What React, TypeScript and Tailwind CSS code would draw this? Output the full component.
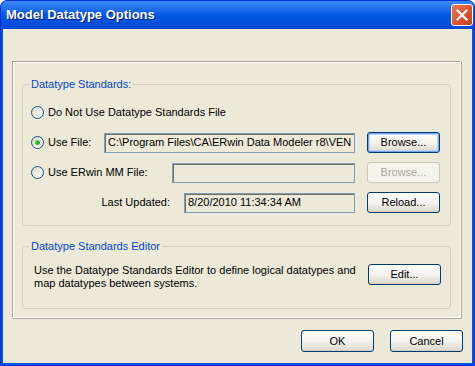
import React from 'react';

const font = { fontFamily: '"Liberation Sans", Arial, sans-serif' };

const Radio: React.FC<{ checked?: boolean }> = ({ checked }) => (
  <span className="relative inline-block w-[13px] h-[13px] rounded-full border border-[#1c5180] bg-gradient-to-br from-[#dcd9cb] to-white shrink-0">
    {checked && (
      <span className="absolute left-[3px] top-[3px] w-[5px] h-[5px] rounded-full bg-gradient-to-br from-[#55d551] to-[#18961a]" />
    )}
  </span>
);

const Button: React.FC<{ label: string; focused?: boolean; disabled?: boolean; className?: string }> = ({
  label,
  focused,
  disabled,
  className = '',
}) => {
  if (disabled) {
    return (
      <div
        className={`flex items-center justify-center w-[73px] h-[21px] rounded-[3px] border border-[#c9c7ba] bg-[#f5f4ea] text-[#aca899] text-[11px] ${className}`}
      >
        {label}
      </div>
    );
  }
  return (
    <div
      className={`flex items-center justify-center w-[73px] h-[21px] rounded-[3px] border border-[#003c74] bg-gradient-to-b from-white via-[#f4f3ee] to-[#dcd8ca] text-black text-[11px] ${
        focused ? 'shadow-[inset_0_0_0_1px_#7ba2e7,inset_0_0_0_2px_#bcd4f6]' : 'shadow-[inset_0_-1px_0_#d6d0c5]'
      } ${className}`}
    >
      {label}
    </div>
  );
};

const Field: React.FC<{ value?: string; className?: string }> = ({ value = '', className = '' }) => (
  <div
    className={`h-[20px] border border-[#7f9db9] bg-[#ece9d8] shadow-[inset_1px_1px_0_#716f64] flex items-center px-[3px] text-[11px] text-black whitespace-nowrap overflow-hidden ${className}`}
  >
    {value}
  </div>
);

export default function App() {
  return (
    <div
      className="w-[475px] h-[366px] flex flex-col bg-[#0055e5] rounded-t-[7px] overflow-hidden border border-[#0831d9]"
      style={font}
    >
      {/* title bar */}
      <div className="h-[28px] shrink-0 flex items-center justify-between pl-[5px] pr-[1px] bg-gradient-to-b from-[#3d8bf5] via-[#0058e6] to-[#0049d4]">
        <span className="text-white font-bold text-[13px] [text-shadow:1px_1px_0_#0a1e7a]">Model Datatype Options</span>
        <div className="w-[22px] h-[22px] rounded-[3px] border border-white bg-gradient-to-br from-[#e77c5e] via-[#e0532f] to-[#c8401d] flex items-center justify-center">
          <svg width="12" height="12" viewBox="0 0 12 12">
            <path d="M1.5 1.5 L10.5 10.5 M10.5 1.5 L1.5 10.5" stroke="white" strokeWidth="2.2" strokeLinecap="square" />
          </svg>
        </div>
      </div>

      {/* body */}
      <div className="flex-1 mx-[2px] mb-[2px] bg-[#ece9d8] flex flex-col">
        <div className="ml-[9px] mt-[32px] w-[449px] h-[257px] border border-t-[#aca899] border-l-[#aca899] border-r-white border-b-white shadow-[1px_1px_0_#aca899,inset_1px_1px_0_white] px-[9px] pt-[16px]">
          <fieldset className="border border-[#d0d0bf] rounded-[4px] px-0 pb-[12px]">
            <legend className="ml-[6px] px-[2px] text-[11px] text-[#0046d5] leading-[13px]">Datatype Standards:</legend>
            <div className="pl-[8px] pr-[9px]">
              <div className="mt-[11px] h-[21px] flex items-center text-[11px]">
                <Radio />
                <span className="ml-[4px]">Do Not Use Datatype Standards File</span>
              </div>
              <div className="mt-[9px] h-[21px] flex items-center text-[11px]">
                <Radio checked />
                <span className="ml-[4px] w-[56px]">Use File:</span>
                <Field value="C:\Program Files\CA\ERwin Data Modeler r8\VEN" className="w-[251px]" />
                <Button label="Browse..." focused className="ml-[12px]" />
              </div>
              <div className="mt-[9px] h-[21px] flex items-center text-[11px]">
                <Radio />
                <span className="ml-[4px] w-[124px]">Use ERwin MM File:</span>
                <Field className="w-[183px]" />
                <Button label="Browse..." disabled className="ml-[12px]" />
              </div>
              <div className="mt-[9px] h-[21px] flex items-center text-[11px]">
                <span className="w-[153px] text-right pr-[14px]">Last Updated:</span>
                <Field value="8/20/2010 11:34:34 AM" className="w-[171px]" />
                <Button label="Reload..." className="ml-[12px]" />
              </div>
            </div>
          </fieldset>

          <fieldset className="mt-[14px] border border-[#d0d0bf] rounded-[4px] px-0 pb-[18px]">
            <legend className="ml-[6px] px-[2px] text-[11px] text-[#0046d5] leading-[13px]">Datatype Standards Editor</legend>
            <div className="pl-[11px] pr-[9px] mt-[11px] flex items-start text-[11px]">
              <p className="flex-1 leading-[13px]">
                Use the Datatype Standards Editor to define logical datatypes and
                <br />
                map datatypes between systems.
              </p>
              <Button label="Edit..." />
            </div>
          </fieldset>
        </div>

        <div className="mt-[12px] flex justify-end gap-[16px] pr-[9px] text-[11px]">
          <Button label="OK" className="h-[22px]" />
          <Button label="Cancel" className="h-[22px]" />
        </div>
      </div>
    </div>
  );
}
